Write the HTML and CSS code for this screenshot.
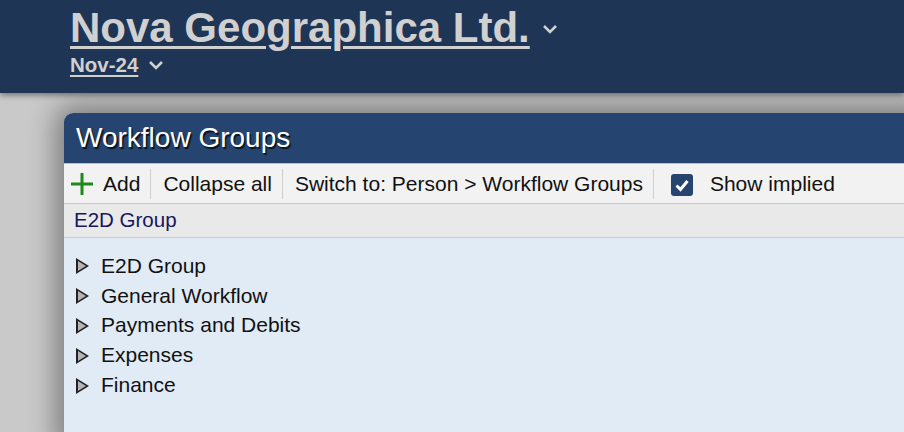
FILE: index.html
```html
<!DOCTYPE html>
<html>
<head>
<meta charset="utf-8">
<link rel="stylesheet" href="styles.css">
</head>
<body>
<header class="top">
  <div class="company">
    <a class="company-name" href="#">Nova Geographica Ltd.</a>
    <svg class="chev chev-lg" viewBox="0 0 16 10" width="16" height="10"><path d="M2 2 L8 8 L14 2" fill="none" stroke="#d0d0d0" stroke-width="2.6"/></svg>
  </div>
  <div class="period">
    <a class="period-name" href="#">Nov-24</a>
    <svg class="chev" viewBox="0 0 16 10" width="16" height="10"><path d="M2 2 L8 8 L14 2" fill="none" stroke="#d0d0d0" stroke-width="2.6"/></svg>
  </div>
</header>
<main class="stage">
  <section class="panel">
    <h1 class="panel-title">Workflow Groups</h1>
    <div class="toolbar">
      <button class="tool tool-add">
        <svg viewBox="0 0 24 24" width="24" height="24"><path d="M12 1 V23 M1 12 H23" stroke="#1b8a1b" stroke-width="3" fill="none"/></svg>
        <span>Add</span>
      </button>
      <button class="tool">Collapse all</button>
      <button class="tool">Switch to: Person &gt; Workflow Groups</button>
      <label class="tool tool-check">
        <span class="checkbox"><svg viewBox="0 0 22 22" width="22" height="22"><path d="M5.5 11.5 L9.5 15.5 L16.5 7" fill="none" stroke="#fff" stroke-width="3"/></svg></span>
        <span>Show implied</span>
      </label>
    </div>
    <div class="crumbs">E2D Group</div>
    <ul class="tree">
      <li><span class="tri"></span>E2D Group</li>
      <li><span class="tri"></span>General Workflow</li>
      <li><span class="tri"></span>Payments and Debits</li>
      <li><span class="tri"></span>Expenses</li>
      <li><span class="tri"></span>Finance</li>
    </ul>
  </section>
</main>
</body>
</html>
```
FILE: styles.css
```css
html, body {
  margin: 0;
  padding: 0;
  height: 100%;
  overflow: hidden;
}
body {
  font-family: "Liberation Sans", Arial, sans-serif;
  background: #c9c9c9;
}
.top {
  position: relative;
  z-index: 2;
  background: #1f3556;
  height: 93px;
  box-sizing: border-box;
  padding: 5px 0 0 70px;
  box-shadow: 0 2px 6px rgba(0,0,0,0.45);
}
.company {
  display: flex;
  align-items: center;
  height: 46px;
}
.company-name {
  color: #d0d0d0;
  font-weight: bold;
  font-size: 42px;
  line-height: 46px;
  text-decoration: underline;
  text-decoration-thickness: 3px;
  text-underline-offset: 4px;
}
.chev { display: block; margin-left: 10px; }
.chev-lg { margin-left: 12px; margin-top: 2px; }
.period {
  display: flex;
  align-items: center;
  height: 24px;
  margin-top: 2px;
}
.period-name {
  color: #d0d0d0;
  font-weight: bold;
  font-size: 20.5px;
  line-height: 24px;
  text-decoration: underline;
  text-decoration-thickness: 2px;
  text-underline-offset: 3px;
}
.stage {
  padding: 20px 0 0 64px;
}
.panel {
  width: 900px;
  height: 330px;
  border-radius: 9px 0 0 0;
  background: #e1ebf5;
  box-shadow: 0 0 28px 8px rgba(0,0,0,0.38);
  overflow: hidden;
}
.panel-title {
  margin: 0;
  height: 51px;
  box-sizing: border-box;
  background: #254570;
  color: #fff;
  font-weight: normal;
  font-size: 28px;
  line-height: 42px;
  padding: 4px 0 0 12px;
  text-shadow: 1.5px 1.5px 1px rgba(0,0,0,0.75);
  border-bottom: 1px solid #b8bfc8;
}
.toolbar {
  display: flex;
  align-items: center;
  height: 39px;
  background: #f2f2f2;
  border-bottom: 1px solid #c8c8c8;
  padding-left: 0;
}
.tool {
  display: flex;
  align-items: center;
  height: 30px;
  padding: 0 10px 0 12px;
  border: 0;
  border-right: 1px solid #cfcfcf;
  background: transparent;
  font-family: inherit;
  font-size: 21px;
  color: #111;
  white-space: nowrap;
  margin: 0;
}
.tool-add { padding-left: 6px; }
.tool-add svg { margin-right: 9px; }
.tool-check { border-right: 0; padding-left: 17px; }
.checkbox {
  width: 22px;
  height: 22px;
  background: #254570;
  border-radius: 3px;
  margin: 2px 17px 0 0;
  display: block;
}
.checkbox svg { display: block; }
.crumbs {
  height: 34px;
  box-sizing: border-box;
  background: #e9e9e9;
  border-bottom: 1px solid #c8cdd2;
  color: #17175a;
  font-size: 20.5px;
  line-height: 31px;
  padding-left: 10px;
}
.tree {
  list-style: none;
  margin: 0;
  padding: 13px 0 0 12px;
}
.tree li {
  display: flex;
  align-items: center;
  height: 29.8px;
  font-size: 21px;
  color: #111;
}
.tri {
  width: 0;
  height: 0;
  position: relative;
  border-left: 13px solid #222;
  border-top: 8px solid transparent;
  border-bottom: 8px solid transparent;
  margin: 1px 12px 0 0;
}
.tri::after {
  content: "";
  position: absolute;
  left: -11px;
  top: -5px;
  border-left: 8px solid #b4b4b4;
  border-top: 5px solid transparent;
  border-bottom: 5px solid transparent;
}
```
